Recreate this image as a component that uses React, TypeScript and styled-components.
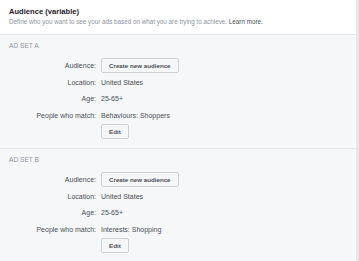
import styled, { createGlobalStyle } from "styled-components"

const GlobalStyle = createGlobalStyle`
  html, body {
    margin: 0;
    padding: 0;
    background: #ffffff;
  }
  body {
    font-family: "Liberation Sans", Arial, sans-serif;
  }
`

const Page = styled.div`
  display: flex;
  width: 359px;
  height: 261px;
  overflow: hidden;
`

const Content = styled.div`
  width: 356px;
  display: flex;
  flex-direction: column;
`

const Scrollbar = styled.div`
  width: 3px;
  background: #e6e7ea;
`

const Header = styled.div`
  padding: 7px 9px 8px 9px;
  background: #ffffff;
`

const Title = styled.div`
  font-size: 7.6px;
  line-height: 10px;
  font-weight: bold;
  color: #1d2129;
`

const Subtitle = styled.div`
  font-size: 6.3px;
  line-height: 9px;
  color: #90949c;
`

const Link = styled.span`
  color: #4b4f56;
`

const Section = styled.div`
  background: #f6f7f9;
  border-top: 1px solid #e5e6e9;
  padding: 7px 9px 8.6px 9px;
`

const SectionTitle = styled.div`
  font-size: 6.6px;
  line-height: 8px;
  color: #90949c;
  text-transform: uppercase;
  margin-bottom: 8px;
`

const Rows = styled.div`
  display: grid;
  grid-template-columns: 87px auto;
  column-gap: 5px;
  row-gap: 1.6px;
  grid-auto-rows: 15px;
  align-items: center;
`

const Label = styled.div`
  font-size: 7px;
  line-height: 15px;
  color: #4b4f56;
  text-align: right;
  white-space: nowrap;
`

const Value = styled.div`
  font-size: 7px;
  line-height: 15px;
  color: #4b4f56;
  white-space: nowrap;
`

const Button = styled.button`
  box-sizing: border-box;
  height: 15px;
  padding: 0 7px;
  background: #f6f7f9;
  border: 1px solid #ced0d4;
  border-radius: 2px;
  font-family: "Liberation Sans", Arial, sans-serif;
  font-size: 6.2px;
  font-weight: bold;
  color: #4b4f56;
  line-height: 13px;
  cursor: pointer;
`

const Cell = styled.div`
  display: flex;
  align-items: center;
`

type AdSet = {
  name: string
  location: string
  age: string
  match: string
}

const adSets: AdSet[] = [
  { name: "Ad Set A", location: "United States", age: "25-65+", match: "Behaviours: Shoppers" },
  { name: "Ad Set B", location: "United States", age: "25-65+", match: "Interests: Shopping" },
]

function AdSetSection({ set }: { set: AdSet }) {
  return (
    <Section>
      <SectionTitle>{set.name}</SectionTitle>
      <Rows>
        <Label>Audience:</Label>
        <Cell>
          <Button>Create new audience</Button>
        </Cell>
        <Label>Location:</Label>
        <Value>{set.location}</Value>
        <Label>Age:</Label>
        <Value>{set.age}</Value>
        <Label>People who match:</Label>
        <Value>{set.match}</Value>
        <span />
        <Cell>
          <Button>Edit</Button>
        </Cell>
      </Rows>
    </Section>
  )
}

export default function App() {
  return (
    <>
      <GlobalStyle />
      <Page>
        <Content>
          <Header>
            <Title>Audience (variable)</Title>
            <Subtitle>
              Define who you want to see your ads based on what you are trying to achieve. <Link>Learn more.</Link>
            </Subtitle>
          </Header>
          {adSets.map((s) => (
            <AdSetSection key={s.name} set={s} />
          ))}
        </Content>
        <Scrollbar />
      </Page>
    </>
  )
}
